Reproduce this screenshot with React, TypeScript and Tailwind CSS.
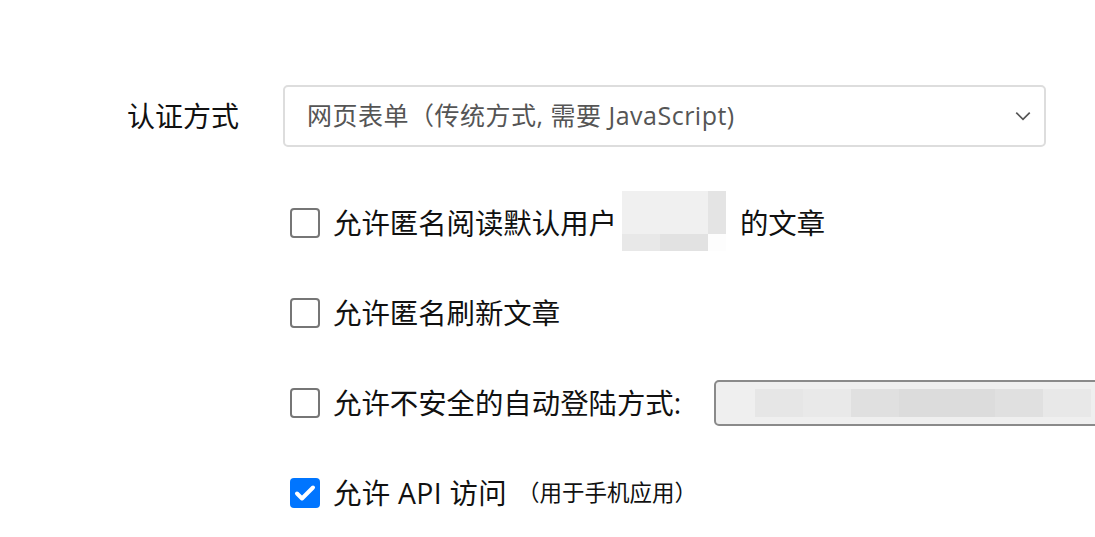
import React from "react";

const Box = ({ checked }: { checked?: boolean }) =>
  checked ? (
    <div className="w-[30px] h-[30px] shrink-0 rounded-[4px] bg-[#0075ff] flex items-center justify-center">
      <svg width="24" height="24" viewBox="0 0 24 24" fill="none">
        <path d="M4 12.5l5 5L20 6.5" stroke="white" strokeWidth="4" strokeLinecap="round" strokeLinejoin="round" />
      </svg>
    </div>
  ) : (
    <div className="w-[30px] h-[30px] shrink-0 rounded-[4px] border-2 border-[#767676] bg-white" />
  );

const blurInput = ["#e6e6e6", "#e9e9e9", "#e0e0e0", "#dcdcdc", "#dcdcdc", "#e0e0e0", "#e8e8e8"];

export default function App() {
  return (
    <div
      className="w-[1095px] h-[537px] bg-white overflow-hidden text-[#111] whitespace-nowrap [text-spacing-trim:space-all]"
      style={{ fontFamily: '"Open Sans", "Noto Sans CJK SC", sans-serif' }}
    >
      <div className="pt-[85px] pl-[127px] flex items-center">
        <div className="w-[156px] text-[28px] leading-none">认证方式</div>
        <div className="w-[763px] h-[62px] rounded-[5px] border-2 border-[#dddddd] flex items-center justify-between pl-[22px] pr-[12px]">
          <span className="text-[25px] text-[#555] tracking-[0.5px]">网页表单（传统方式, 需要 JavaScript)</span>
          <svg width="18" height="18" viewBox="0 0 16 16" fill="none">
            <path d="M2 5l6 6 6-6" stroke="#555" strokeWidth="1.5" />
          </svg>
        </div>
      </div>

      <div className="pl-[290px] mt-[53px] flex flex-col gap-[44px] text-[28.4px]">
        <div className="h-[46px] flex items-center">
          <Box />
          <span className="ml-[13px]">允许匿名阅读默认用户</span>
          <div className="ml-[5px] mt-[-4px] flex flex-col shrink-0">
            <div className="flex">
              <div className="w-[86px] h-[43px] bg-[#f0f0f0]" />
              <div className="w-[18px] h-[43px] bg-[#e4e4e4]" />
            </div>
            <div className="flex">
              <div className="w-[38px] h-[17px] bg-[#e8e8e8]" />
              <div className="w-[48px] h-[17px] bg-[#e2e2e2]" />
              <div className="w-[18px] h-[17px] bg-[#fdfdfd]" />
            </div>
          </div>
          <span className="ml-[14px]">的文章</span>
        </div>

        <div className="h-[46px] flex items-center">
          <Box />
          <span className="ml-[13px]">允许匿名刷新文章</span>
        </div>

        <div className="h-[46px] flex items-center">
          <Box />
          <span className="ml-[13px] shrink-0">允许不安全的自动登陆方式:</span>
          <div className="ml-[33px] w-[420px] h-[46px] shrink-0 rounded-[5px] border-2 border-[#8a8a8a] bg-[#efefef] flex items-center pl-[39px]">
            {blurInput.map((c, i) => (
              <div key={i} className="w-[48px] h-[28px] shrink-0" style={{ background: c }} />
            ))}
          </div>
        </div>

        <div className="h-[46px] flex items-center">
          <Box checked />
          <span className="ml-[13px] tracking-[0.3px]">允许 API 访问</span>
          <span className="ml-[10px] text-[22.5px]">（用于手机应用）</span>
        </div>
      </div>
    </div>
  );
}
